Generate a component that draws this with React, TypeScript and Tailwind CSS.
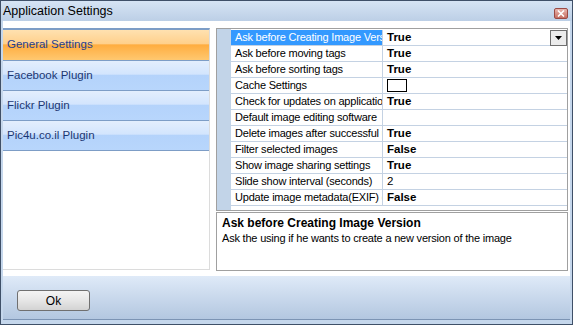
import React from 'react'

const font = { fontFamily: '"Liberation Sans", Arial, sans-serif' }

type Row = { name: string; value: string; bold?: boolean; box?: boolean }

const rows: Row[] = [
  { name: 'Ask before Creating Image Version', value: 'True', bold: true },
  { name: 'Ask before moving tags', value: 'True', bold: true },
  { name: 'Ask before sorting tags', value: 'True', bold: true },
  { name: 'Cache Settings', value: '', box: true },
  { name: 'Check for updates on application start', value: 'True', bold: true },
  { name: 'Default image editing software', value: '' },
  { name: 'Delete images after successful upload', value: 'True', bold: true },
  { name: 'Filter selected images', value: 'False', bold: true },
  { name: 'Show image sharing settings', value: 'True', bold: true },
  { name: 'Slide show interval (seconds)', value: '2' },
  { name: 'Update image metadata(EXIF) on save', value: 'False', bold: true },
]

const plugins = ['Facebook Plugin', 'Flickr Plugin', 'Pic4u.co.il Plugin']

function NavItem({ label, active }: { label: string; active?: boolean }) {
  return (
    <div
      className={
        active
          ? 'flex h-[31px] items-center border-b border-[#7d9dc6] bg-[linear-gradient(#ffe1b0,#ffd08c_45%,#ffad40_50%,#ffc870)] pl-[4px] text-[11.5px] text-[#1e3f8f]'
          : 'flex h-[30px] items-center border-b border-[#7d9dc6] bg-[linear-gradient(#e3eefd,#d3e5fd_45%,#b4d3fb_50%,#b8d6fc)] pl-[4px] text-[11.5px] text-[#1c3772]'
      }
    >
      {label}
    </div>
  )
}

export default function App() {
  return (
    <div
      className="flex h-[325px] w-[573px] flex-col border border-[#3f5068] bg-[#c5d7ec]"
      style={font}
    >
      <div className="flex h-[20px] shrink-0 items-center justify-between bg-[linear-gradient(#d6e4f4,#bccfe6)] pl-[2px] pr-[4px]">
        <span className="text-[12.5px] text-black">Application Settings</span>
        <div className="mt-[4px] flex h-[11px] w-[14px] items-center justify-center rounded-[2px] border border-[#9b4a44] bg-[linear-gradient(#e9b6ae,#c66e62)]">
          <svg width="8" height="7" viewBox="0 0 8 7">
            <path d="M1 0.5 L7 6.5 M7 0.5 L1 6.5" stroke="#fff" strokeWidth="1.6" />
          </svg>
        </div>
      </div>

      <div className="flex flex-1 flex-col px-[2px]">
        <div className="flex h-[255px] gap-[6px] bg-white pr-[2px] pt-[7px]">
          <div className="flex h-[242px] w-[207px] flex-col border-r border-b border-[#dcdcdc] border-t-2 border-t-[#7d9dc6]">
            <NavItem label="General Settings" active />
            {plugins.map((p) => (
              <NavItem key={p} label={p} />
            ))}
          </div>

          <div className="flex w-[352px] flex-col">
            <div className="flex h-[183px] border border-[#a0a0a0] bg-white">
              <div className="w-[14px] shrink-0 bg-[#c2d4e8]" />
              <div className="flex flex-1 flex-col pt-[1px]">
                {rows.map((r, i) => (
                  <div key={r.name} className="flex h-[16px] border-b border-[#c4d2e3] text-[11px] leading-[15px] tracking-[-0.2px]">
                    <div
                      className={
                        i === 0
                          ? 'w-[152px] shrink-0 overflow-hidden whitespace-nowrap border-r border-[#c4d2e3] bg-[#3399ff] pl-[4px] text-white'
                          : 'w-[152px] shrink-0 overflow-hidden whitespace-nowrap border-r border-[#c4d2e3] pl-[4px] text-black'
                      }
                    >
                      {r.name}
                    </div>
                    <div className="flex flex-1 items-center justify-between pl-[4px] text-black">
                      {r.box ? (
                        <div className="h-[13px] w-[20px] border border-black bg-white" />
                      ) : (
                        <span className={r.bold ? 'text-[11.5px] font-bold tracking-normal' : 'text-[11.5px] tracking-normal'}>{r.value}</span>
                      )}
                      {i === 0 && (
                        <div className="flex h-[16px] w-[17px] items-center justify-center border border-[#6f6f6f] bg-[#ececec]">
                          <svg width="7" height="4" viewBox="0 0 7 4">
                            <path d="M0 0 H7 L3.5 4 Z" fill="#000" />
                          </svg>
                        </div>
                      )}
                    </div>
                  </div>
                ))}
              </div>
            </div>
            <div className="mt-[1px] h-[59px] border border-[#a0a0a0] bg-white px-[5px] pt-[3px] text-black">
              <div className="text-[12px] font-bold leading-[15px]">Ask before Creating Image Version</div>
              <div className="text-[11px] leading-[15px] tracking-[-0.2px]">Ask the using if he wants to create a new version of the image</div>
            </div>
          </div>
        </div>

        <div className="flex h-[44px] items-center border-b border-[#7c94b4] bg-[linear-gradient(#dfeaf8,#b3c7e0)] pl-[14px]">
          <button className="mt-[6px] h-[21px] w-[73px] rounded-[3px] border border-[#707070] bg-[linear-gradient(#f4f4f4,#e6e6e6_50%,#d3d3d3)] text-[12px] text-black">
            Ok
          </button>
        </div>
      </div>
    </div>
  )
}
